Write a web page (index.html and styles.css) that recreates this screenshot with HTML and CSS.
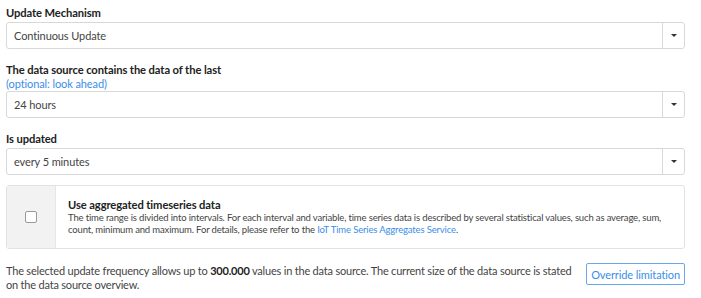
FILE: index.html
```html
<!doctype html>
<html>
<head>
<meta charset="utf-8">
<link rel="stylesheet" href="styles.css">
<title>Update settings</title>
</head>
<body>
<div class="form">
  <div class="field">
    <label class="label">Update Mechanism</label>
    <div class="select">
      <span class="value">Continuous Update</span>
      <span class="caret"></span>
    </div>
  </div>

  <div class="field">
    <label class="label">The data source contains the data of the last</label>
    <a class="hint">(optional: look ahead)</a>
    <div class="select">
      <span class="value">24 hours</span>
      <span class="caret"></span>
    </div>
  </div>

  <div class="field">
    <label class="label">Is updated</label>
    <div class="select">
      <span class="value">every 5 minutes</span>
      <span class="caret"></span>
    </div>
  </div>

  <div class="option">
    <div class="option-check"><span class="checkbox"></span></div>
    <div class="option-body">
      <h4>Use aggregated timeseries data</h4>
      <p>The time range is divided into intervals. For each interval and variable, time series data is described by several statistical values, such as average, sum, count, minimum and maximum. For details, please refer to the <a>IoT Time Series Aggregates Service</a>.</p>
    </div>
  </div>

  <div class="limit">
    <p>The selected update frequency allows up to <b>300.000</b> values in the data source. The current size of the data source is stated on the data source overview.</p>
    <button class="btn">Override limitation</button>
  </div>
</div>
</body>
</html>
```

FILE: styles.css
```css
body {
    margin: 0;
    font-family: Lato, "Noto Sans", sans-serif;
    font-size: 11px;
    letter-spacing: -0.1px;
    color: #333;
    background: white;
}
.form {
    width: 679px;
    padding: 5px 0 0 6px;
}
.field + .field {
    margin-top: 13px;
}
.label {
    display: block;
    margin-bottom: 2px;
    font-weight: bold;
    font-size: 11.2px;
    line-height: 15px;
    color: #222;
}
.hint {
    display: block;
    margin-top: -2px;
    color: #3b8ee8;
    line-height: 13px;
}
.select {
    display: flex;
    height: 25px;
    margin-top: 1px;
    border: 1px solid #d8d8d8;
    border-radius: 3px;
}
.value {
    flex: 1;
    padding-left: 7px;
    line-height: 25px;
    color: #444;
}
.caret {
    width: 21px;
    border-left: 1px solid #d8d8d8;
    display: flex;
    align-items: center;
    justify-content: center;
}
.caret:after {
    content: "";
    border-left: 3px solid transparent;
    border-right: 3px solid transparent;
    border-top: 3px solid #333;
}
.option {
    display: flex;
    margin-top: 10px;
    border: 1px solid #e2e2e2;
    border-radius: 3px;
    height: 62px;
}
.option-check {
    flex-shrink: 0;
    width: 48px;
    background: #f2f2f2;
    border-right: 1px solid #e6e6e6;
    display: flex;
    align-items: center;
    justify-content: center;
}
.checkbox {
    width: 10px;
    height: 10px;
    border: 1px solid #999;
    border-radius: 2px;
    background: white;
}
.option-body {
    padding: 12px 12px 0 12px;
}
.option-body h4 {
    margin: 0;
    font-size: 11.2px;
    line-height: 14px;
    color: #222;
}
.option-body p {
    margin: 0;
    font-size: 9.5px;
    letter-spacing: -0.15px;
    line-height: 12px;
    color: #444;
}
a {
    color: #3b8ee8;
}
.limit {
    display: flex;
    align-items: flex-start;
    margin-top: 14px;
}
.limit p {
    flex: 1;
    margin: 0;
    padding-top: 1px;
    letter-spacing: -0.2px;
    line-height: 14px;
    color: #444;
}
.limit b {
    color: #222;
}
.btn {
    margin-left: 14px;
    height: 22px;
    padding: 0 4px;
    border: 1px solid #6aa6ee;
    border-radius: 2px;
    background: white;
    color: #3b8ee8;
    font-family: inherit;
    font-size: 11px;
    letter-spacing: -0.1px;
    white-space: nowrap;
}
```
